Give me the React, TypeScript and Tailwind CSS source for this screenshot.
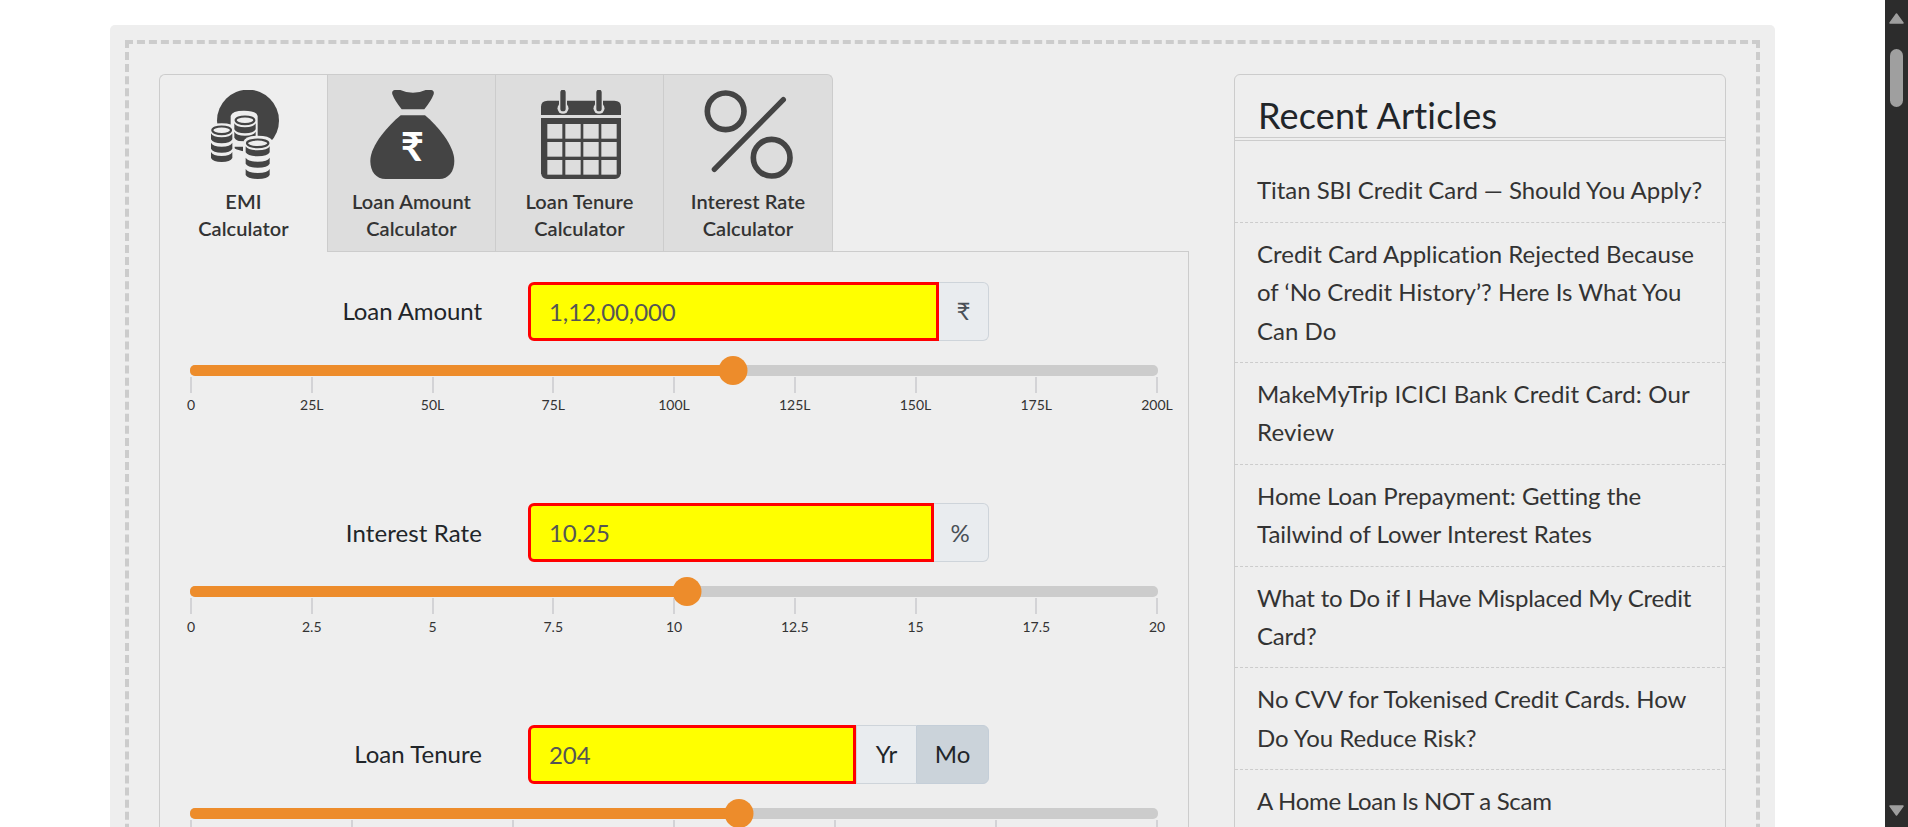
import type { ReactNode } from "react";

function CoinStack({ cx, top, rx, bands, step }: { cx: number; top: number; rx: number; bands: number; step: number }) {
  const ry = 13;
  const l = cx - rx;
  const r = cx + rx;
  return (
    <g>
      <ellipse cx={cx} cy={top} rx={rx - 4} ry={ry - 1.5} fill="#eee" stroke="#444" strokeWidth="6.5" />
      {Array.from({ length: bands }, (_, i) => {
        const y = top + 9 + i * step;
        return (
          <path
            key={i}
            d={`M${l} ${y}Q${l + 6} ${y + 12} ${cx} ${y + 12}Q${r - 6} ${y + 12} ${r} ${y}V${y + 18}Q${r - 6} ${y + 30} ${cx} ${y + 30}Q${l + 6} ${y + 30} ${l} ${y + 18}Z`}
            fill="#444"
          />
        );
      })}
    </g>
  );
}

function CoinsIcon() {
  return (
    <svg viewBox="-3 30 267 270" className="h-[90px] w-[89px]">
      <circle cx="144" cy="122" r="93" fill="#444" />
      <path d="M92 200V108Q96 92 132 92Q170 92 173 108V190H92Z" fill="#eee" />
      <path d="M24 250V146Q30 130 65 130Q100 130 104 146V250Z" fill="#eee" />
      <CoinStack cx={135} top={121} rx={32} bands={2} step={25} />
      <path d="M129 300V186Q136 167 173 167Q208 167 216 180V300Z" fill="#eee" />
      <path d="M94 200H130V184H110L98 176Z" fill="#eee" />
      <CoinStack cx={65} top={151} rx={32} bands={3} step={28} />
      <CoinStack cx={173} top={190} rx={36} bands={3} step={34} />
    </svg>
  );
}

function BagIcon() {
  return (
    <svg viewBox="801 240 267 270" className="h-[90px] w-[89px]" fill="#444">
      <path d="M884 240H901Q917 248 939 248Q961 248 977 240H994Q1004 242 1001 253Q994 272 973 298H905Q884 272 877 253Q874 242 884 240Z" />
      <path d="M902 316H975C1010 345 1063 405 1063 453C1063 485 1045 507 1018 507H857C828 507 811 485 811 453C811 405 867 345 902 316Z" />
      <text x="937" y="453" textAnchor="middle" fontSize="120" fontWeight="700" fill="#fff">
        ₹
      </text>
    </svg>
  );
}

function CalendarIcon() {
  return (
    <svg viewBox="165 90 267 270" className="h-[90px] w-[89px]">
      <path d="M183 165V140Q183 122 203 122H403Q423 122 423 140V165Z" fill="#444" />
      <circle cx="249" cy="145" r="16.5" fill="#ddd" />
      <circle cx="357" cy="145" r="16.5" fill="#ddd" />
      <path d="M249 98V146M357 98V146" stroke="#ddd" strokeWidth="24" />
      <path d="M249 97V146M357 97V146" stroke="#444" strokeWidth="16" strokeLinecap="round" />
      <path d="M183 174H423V340Q420 357 405 357H201Q186 357 183 340Z" fill="#444" />
      {[192, 246, 300].map((y) => (
        <g key={y} fill="#ddd">
          <rect x="202" y={y} width="45" height="44" />
          <rect x="256" y={y} width="46" height="44" />
          <rect x="310" y={y} width="46" height="44" />
          <rect x="364" y={y} width="46" height="44" />
        </g>
      ))}
    </svg>
  );
}

function PercentIcon() {
  return (
    <svg viewBox="669 90 270 270" className="size-[90px]" fill="none" stroke="#444">
      <circle cx="737" cy="154" r="55" strokeWidth="17" />
      <circle cx="875" cy="293" r="55" strokeWidth="17" />
      <path d="M703 328L910 119" strokeWidth="16" strokeLinecap="round" />
    </svg>
  );
}

function Tab({ icon, title, className }: { icon: ReactNode; title: string; className: string }) {
  return (
    <button
      type="button"
      className={`flex flex-col items-center border-t border-l border-[#ccc] pt-[15px] text-[20px] leading-[26px] font-semibold tracking-[0.08px] text-[#333] ${className}`}
    >
      {icon}
      <span className="mt-[8px] mb-[0.7px]">{title}</span>
      <span>Calculator</span>
    </button>
  );
}

function Slider({ percent, ticks, labels }: { percent: number; ticks: number; labels: string[] }) {
  return (
    <div className="mt-[24px]">
      <div className="relative h-[10.7px] rounded-[5px] bg-[#ccc]">
        <div className="h-full rounded-l-[5px] bg-[#ed8c2b]" style={{ width: `${percent}%` }} />
        <div
          className="absolute top-[-9px] size-[29px] -translate-x-1/2 rounded-full bg-[#ed8c2b]"
          style={{ left: `${percent}%` }}
        />
      </div>
      <div className="mx-px mt-px flex justify-between">
        {Array.from({ length: ticks }, (_, i) => (
          <div key={i} className="flex w-0 flex-col items-center">
            <div className="h-4 w-[2px] shrink-0 bg-[#d3d3d6]" />
            {labels[i] && <span className="mt-[2.4px] text-[14px] leading-[20px] text-[#333]">{labels[i]}</span>}
          </div>
        ))}
      </div>
    </div>
  );
}

function Field({
  label,
  labelClass,
  value,
  addon,
  percent,
  ticks,
  labels = [],
}: {
  label: string;
  labelClass: string;
  value: string;
  addon: ReactNode;
  percent: number;
  ticks: number;
  labels?: string[];
}) {
  return (
    <div className="h-[221.5px]">
      <div className="flex h-[59.2px] items-center gap-[46px]">
        <label className={`w-[292px] text-right text-[24px] text-[#212529] ${labelClass}`}>{label}</label>
        <div className="flex h-full w-[461px]">
          <div className="flex min-w-0 flex-1 items-center rounded-l-md border-3 border-[#f00] bg-[#ff0] pt-px pl-[18px] text-[24px] tracking-[-0.1px] text-[#555]">
            {value}
          </div>
          {addon}
        </div>
      </div>
      <Slider percent={percent} ticks={ticks} labels={labels} />
    </div>
  );
}

const articles: { lines: string[]; className: string }[] = [
  { lines: ["Titan SBI Credit Card — Should You Apply?"], className: "tracking-[-0.05px]" },
  {
    lines: ["Credit Card Application Rejected Because", "of ‘No Credit History’? Here Is What You", "Can Do"],
    className: "tracking-[0.01px]",
  },
  { lines: ["MakeMyTrip ICICI Bank Credit Card: Our", "Review"], className: "tracking-[0.16px]" },
  { lines: ["Home Loan Prepayment: Getting the", "Tailwind of Lower Interest Rates"], className: "tracking-[-0.03px]" },
  { lines: ["What to Do if I Have Misplaced My Credit", "Card?"], className: "tracking-[-0.18px]" },
  { lines: ["No CVV for Tokenised Credit Cards. How", "Do You Reduce Risk?"], className: "tracking-[-0.03px]" },
  { lines: ["A Home Loan Is NOT a Scam"], className: "tracking-[-0.28px]" },
];

export default function App() {
  return (
    <div className="flex h-[827px] overflow-hidden bg-white font-[Lato,sans-serif] [font-variant-ligatures:none]">
      <main className="h-[1100px] flex-1 px-[110px] pt-[25px]">
        <div className="h-full rounded-[5px] bg-[#eee] p-[15px]">
          <div className="flex h-full items-start gap-[45px] border-4 border-dashed border-[#ccc] p-[30px]">
            <section className="flex-1">
              <div className="flex">
                <Tab icon={<CoinsIcon />} title="EMI" className="h-[178px] w-[168px] rounded-tl-[6px]" />
                <div className="flex h-[178px] flex-1 border-b border-[#ccc]">
                  <Tab icon={<BagIcon />} title="Loan Amount" className="w-[168px] bg-[#ddd]" />
                  <Tab icon={<CalendarIcon />} title="Loan Tenure" className="w-[168px] bg-[#ddd]" />
                  <Tab icon={<PercentIcon />} title="Interest Rate" className="w-[170px] rounded-tr-[6px] border-r bg-[#ddd]" />
                </div>
              </div>
              <div className="h-[800px] border-x border-[#ccc] px-[30px] pt-[29.8px]">
                <Field
                  label="Loan Amount"
                  labelClass="tracking-[-0.08px]"
                  value="1,12,00,000"
                  percent={56.1}
                  ticks={9}
                  labels={["0", "25L", "50L", "75L", "100L", "125L", "150L", "175L", "200L"]}
                  addon={
                    <span className="flex w-[50px] items-center justify-center rounded-r-md border border-l-0 border-[#ced4da] bg-[#e9ecef] text-[24px] text-[#495057]">
                      ₹
                    </span>
                  }
                />
                <Field
                  label="Interest Rate"
                  labelClass="tracking-[0.1px]"
                  value="10.25"
                  percent={51.35}
                  ticks={9}
                  labels={["0", "2.5", "5", "7.5", "10", "12.5", "15", "17.5", "20"]}
                  addon={
                    <span className="flex w-[55px] items-center justify-center rounded-r-md border border-l-0 border-[#ced4da] bg-[#e9ecef] pr-0.5 text-[24px] text-[#495057]">
                      %
                    </span>
                  }
                />
                <Field
                  label="Loan Tenure"
                  labelClass="tracking-[0.04px]"
                  value="204"
                  percent={56.75}
                  ticks={7}
                  addon={
                    <div className="flex text-[24px] text-[#212529]">
                      <button type="button" className="w-[60px] border-y border-l border-[#ced4da] bg-[#e9ecef]">
                        Yr
                      </button>
                      <button type="button" className="w-[73px] rounded-r-md border border-[#c4ced8] bg-[#cbd3da]">
                        Mo
                      </button>
                    </div>
                  }
                />
              </div>
            </section>
            <aside className="h-[980px] w-[492px] rounded-[6px] border border-[#ccc]">
              <h2 className="h-[66px] border-b-4 border-double border-[#ccc] pt-[19px] pl-[23px] text-[36px] leading-[43px] tracking-[0.2px] text-[#212529]">
                Recent Articles
              </h2>
              <ul className="pt-[18.3px] text-[24px] leading-[38.4px] text-[#333]">
                {articles.map(({ lines, className }) => (
                  <li key={lines[0]} className={`border-b border-dashed border-[#ccc] py-3 pl-[22px] ${className}`}>
                    {lines.map((line) => (
                      <div key={line} className="whitespace-nowrap">
                        {line}
                      </div>
                    ))}
                  </li>
                ))}
              </ul>
            </aside>
          </div>
        </div>
      </main>
      <div className="flex w-[23px] flex-col items-center bg-[#2c2c2c] pt-[13px] pb-[11px]">
        <svg viewBox="0 0 15 11" className="h-[11px] w-[15px]">
          <path d="M7.5 1L14 10H1Z" fill="#9f9f9f" stroke="#9f9f9f" strokeWidth="1.5" strokeLinejoin="round" />
        </svg>
        <div className="mt-[25px] h-[58px] w-[13px] rounded-full bg-[#9f9f9f]" />
        <svg viewBox="0 0 15 11" className="mt-auto h-[11px] w-[15px]">
          <path d="M7.5 10L14 1H1Z" fill="#9f9f9f" stroke="#9f9f9f" strokeWidth="1.5" strokeLinejoin="round" />
        </svg>
      </div>
    </div>
  );
}
